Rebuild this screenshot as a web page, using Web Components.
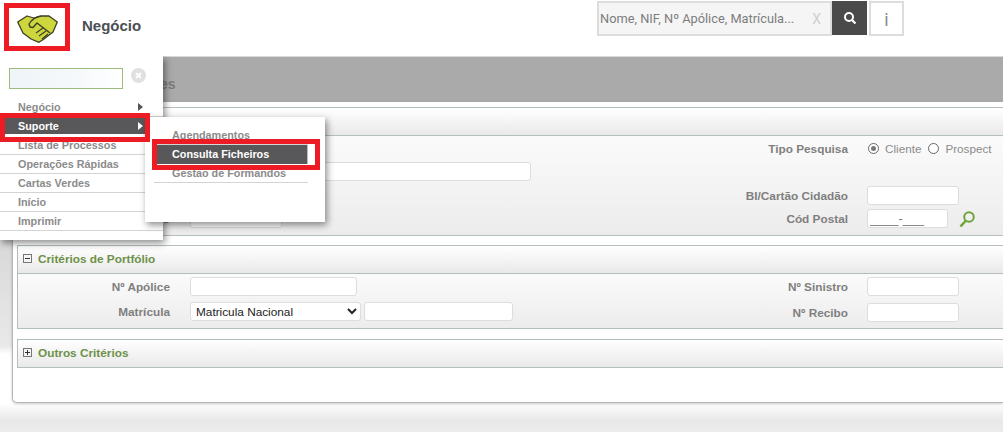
<!DOCTYPE html>
<html>
<head>
<meta charset="utf-8">
<style>
  html, body { margin: 0; height: 432px; overflow: hidden; background: #fff; }
  body { font-family: "Liberation Sans", Arial, sans-serif; }
</style>
</head>
<body>
<app-page></app-page>
<script>
class TopBar extends HTMLElement {
  constructor() {
    super();
    this.attachShadow({ mode: 'open' });
    this.shadowRoot.innerHTML = `
      <style>
        :host { display: flex; height: 56px; background: #fff; align-items: flex-start; }
        .logo { box-sizing: border-box; width: 66px; height: 48px; margin: 3px 0 0 4px; border: 5px solid #ed1c24; display: flex; align-items: center; justify-content: center; }
        h1 { font: bold 15px "Liberation Sans", sans-serif; color: #4a4f55; margin: 17px 0 0 12px; width: 515px; }
        .search { box-sizing: border-box; margin-top: 1px; width: 235px; height: 35px; background: #f5f5f5; border: 2px solid #ddd; display: flex; align-items: center; font: 12.8px Roboto, sans-serif; color: #7d7d7d; padding-left: 1px; }
        .search span { flex: 1; }
        .search i { font-style: normal; color: #cfcfcf; margin-right: 9px; font-size: 14px; }
        .go { width: 35px; height: 34px; margin-top: 1px; background: #4a4a4a; display: flex; align-items: center; justify-content: center; }
        .info { box-sizing: border-box; width: 35px; height: 35px; margin: 1px 0 0 2px; border: 2px solid #ddd; color: #8a8a8a; font: 18px Roboto, sans-serif; text-align: center; line-height: 33px; }
      </style>
      <div class="logo">
        <svg width="41" height="28" viewBox="0 0 41 28" style="margin-top:3px">
          <path d="M.7 7 L10 1 L17 3 L24 1 L32 1 L40.3 7 L36 17 L27 24 L22 27.3 L14 24 L6 18 Z" fill="#cdd63c" stroke="#3e3e28" stroke-width="1.3" stroke-linejoin="round"/>
          <path d="M24 1 C18 2 15 4 12 9 L13 12 L16 12.5 L20 8 L33 18" fill="none" stroke="#3e3e28" stroke-width="1.4" stroke-linejoin="round"/>
          <path d="M26 13 L19 18 M29 16 L22 21 M31 19 L25 24" fill="none" stroke="#3e3e28" stroke-width="1.2"/>
        </svg>
      </div>
      <h1><slot></slot></h1>
      <div class="search"><span>Nome, NIF, Nº Apólice, Matrícula...</span><i>X</i></div>
      <div class="go">
        <svg width="14" height="14" viewBox="0 0 14 14"><circle cx="6" cy="6" r="4" fill="none" stroke="#fff" stroke-width="2"/><path d="M9 9 L12.5 12.5" stroke="#fff" stroke-width="2.2"/></svg>
      </div>
      <div class="info">i</div>
    `;
  }
}

class FieldRow extends HTMLElement {
  constructor() {
    super();
    this.attachShadow({ mode: 'open' });
    this.shadowRoot.innerHTML = `
      <style>
        :host { display: flex; flex: none; align-items: center; height: 19px; font: bold 11.8px "Liberation Sans", sans-serif; color: #7f7f7f; }
        label { flex: none; text-align: right; width: var(--label-width, 120px); margin-right: var(--label-gap, 19px); white-space: nowrap; }
        ::slotted(*) { flex: none; }
      </style>
      <label></label><slot></slot>
    `;
    this.shadowRoot.querySelector('label').textContent = this.getAttribute('label');
  }
}

class GroupBox extends HTMLElement {
  constructor() {
    super();
    this.attachShadow({ mode: 'open' });
    const open = this.hasAttribute('open');
    const title = this.getAttribute('title');
    this.shadowRoot.innerHTML = `
      <style>
        :host { display: block; box-sizing: border-box; border: 1px solid #b4bfbd; border-width: 1px 0 1px 1px; }
        .head { box-sizing: border-box; height: 27px; display: flex; align-items: center; padding: 0 0 2px 5px; gap: 6px; font: bold 11.8px "Liberation Sans", sans-serif; color: #6d9148; background: linear-gradient(#fff, #e9e9e9); }
        .body { border-top: 1px solid #b4bfbd; background: linear-gradient(#fbfbfb, #ececec); }
        svg { flex: none; }
      </style>
      <div class="head">
        ${title ? `<svg width="9" height="9" viewBox="0 0 9 9"><rect x=".5" y=".5" width="8" height="8" fill="#f5f5f5" stroke="#777"/><path d="M2 4.5H7${open ? '' : 'M4.5 2V7'}" stroke="#333"/></svg>
        <span>${title}</span>` : ''}
      </div>
      ${open ? '<div class="body"><slot></slot></div>' : ''}
    `;
  }
}

class PopMenu extends HTMLElement {
  constructor() {
    super();
    this.attachShadow({ mode: 'open' });
    this.shadowRoot.innerHTML = `
      <style>
        :host { display: block; position: absolute; box-sizing: border-box; background: #fff; box-shadow: 2px 3px 7px rgba(0,0,0,.45); font: bold 10.8px "Liberation Sans", sans-serif; color: #8b8b8b; }
      </style>
      <slot></slot>
    `;
  }
}

class MenuItem extends HTMLElement {
  constructor() {
    super();
    this.attachShadow({ mode: 'open' });
    this.shadowRoot.innerHTML = `
      <style>
        :host { display: flex; align-items: center; box-sizing: border-box; height: 19px; border-bottom: 1px solid #d4d4d4; padding: 0 20px 0 var(--item-left, 18px); justify-content: space-between; }
        :host([active]) { background: linear-gradient(#58585a var(--dark, 19px), #fff var(--dark, 19px)); color: #fff; border-bottom: 0; border-right: var(--edge, 0) solid #bbb; padding-bottom: 2px; }
        .arrow { width: 0; height: 0; border-left: 5px solid #555; border-top: 4.5px solid transparent; border-bottom: 4.5px solid transparent; }
        :host([active]) .arrow { border-left-color: #fff; }
      </style>
      <span><slot></slot></span>
      ${this.hasAttribute('arrow') ? '<i class="arrow"></i>' : ''}
    `;
  }
}

class AppPage extends HTMLElement {
  constructor() {
    super();
    this.attachShadow({ mode: 'open' });
    this.shadowRoot.innerHTML = `
      <style>
        :host { display: block; position: relative; width: 1003px; height: 432px; overflow: hidden; background: linear-gradient(#d8d8d8 240px, #e9e9e9 346px, #fff 354px, #fff 403px, #e8e8e8 420px, #ececec); font: 12px "Liberation Sans", sans-serif; }
        .band { height: 46px; background: #aaaaaa; border-top: 1px solid #d9d9d9; box-sizing: border-box; font: bold 14px "Liberation Sans", sans-serif; color: #7b7b7b; padding: 19px 0 0 160px; }
        .panel { box-sizing: border-box; height: 301px; padding: 5px 0 0 4px; margin-left: 12px; background: #fff; border: 1px solid #b5b5b5; border-width: 0 0 1px 1px; border-radius: 0 0 0 5px; box-shadow: 0 1px 3px rgba(0,0,0,.2); }
        .second { margin-top: 9px; }
        .third { margin-top: 10px; }
        .client { display: flex; flex-direction: column; height: 99px; padding: 3px 44px 0 0; box-sizing: border-box; }
        .row { display: flex; flex: none; height: 19px; }
        .row.mt4 { margin-top: 4px; }
        .row.mt6 { margin-top: 5px; }
        .row field-row.end { margin-left: auto; width: 231px; }
        .cols { display: flex; justify-content: space-between; padding: 3px 44px 6px 0; }
        .col { display: flex; flex-direction: column; gap: 6px; --label-width: 152px; --label-gap: 20px; }
        .col.right { gap: 7px; --label-width: 120px; --label-gap: 19px; }
        input[type=text], select { box-sizing: border-box; height: 19px; border: 1px solid #ddd; border-radius: 3px; background: #fff; font: 12px "Liberation Sans", sans-serif; }
        select { color: #222; width: 171px; padding-left: 1px; font-size: 11.8px; }
        .w92 { width: 92px; }
        .name { width: 341px; margin-left: 172px; }
        .left { --label-width: 152px; --label-gap: 20px; }
        .cep { width: 81px; color: #777; font-size: 12.8px !important; padding: 0 2px; }
        .opts { display: flex; align-items: center; font: 11.7px "Liberation Sans", sans-serif; color: #8b8b8b; white-space: nowrap; margin-left: 1px; }
        .radio { box-sizing: border-box; width: 11px; height: 11px; border: 1px solid #666; border-radius: 50%; background: #fff; margin-right: 6px; position: relative; }
        .radio.on::after { content: ""; position: absolute; inset: 2px; border-radius: 50%; background: #777; }
        .opts span { margin-right: 7px; }
        .lens { margin-left: 10px; }
        .red { position: absolute; border: 5px solid #ed1c24; box-sizing: border-box; }
        .filter { display: flex; align-items: center; padding: 12px 0 9px 9px; gap: 8px; }
        .filter div { box-sizing: border-box; width: 114px; height: 21px; border: 1px solid #9dbb7e; background: linear-gradient(90deg, #eef4f8, #f6f9fb 60%, #fff); }
        .filter svg { margin-top: -7px; }
        .main-menu { left: 0; top: 56px; width: 163px; height: 184px; clip-path: inset(0 -14px -14px 0); --dark: 17px; }
        .sub-menu { left: 145px; top: 117px; width: 180px; height: 105px; padding: 9px 17px 0 9px; --item-left: 18px; --edge: 1px; }
      </style>
      <top-bar>Negócio</top-bar>
      <div class="band">es</div>
      <div class="panel">
        <group-box open>
          <div class="client">
            <div class="row">
              <field-row class="end" label="Tipo Pesquisa">
                <div class="opts"><i class="radio on"></i><span>Cliente</span><i class="radio"></i><span>Prospect</span></div>
              </field-row>
            </div>
            <div class="row mt4"><input type="text" class="name"></div>
            <div class="row mt6">
              <field-row class="end" label="BI/Cartão Cidadão"><input type="text" class="w92"></field-row>
            </div>
            <div class="row mt4">
              <field-row class="left" label="o"><input type="text" class="w92"></field-row>
              <field-row class="end" label="Cód Postal"><input type="text" class="cep" value="____-___">
                <svg class="lens" width="17" height="18" viewBox="0 0 17 18"><circle cx="11" cy="7" r="4.8" fill="none" stroke="#6ea33a" stroke-width="2"/><path d="M7.5 11 L2.5 16.5" stroke="#6ea33a" stroke-width="2.6"/></svg>
              </field-row>
            </div>
          </div>
        </group-box>
        <group-box class="second" title="Critérios de Portfólio" open>
          <div class="cols">
            <div class="col">
              <field-row label="Nº Apólice"><input type="text" style="width:167px"></field-row>
              <field-row label="Matrícula">
                <select><option>Matricula Nacional</option></select>
                <input type="text" style="width:149px;margin-left:3px">
              </field-row>
            </div>
            <div class="col right">
              <field-row label="Nº Sinistro"><input type="text" class="w92"></field-row>
              <field-row label="Nº Recibo"><input type="text" class="w92"></field-row>
            </div>
          </div>
        </group-box>
        <group-box class="third" title="Outros Critérios"></group-box>
      </div>
      <pop-menu class="main-menu">
        <div class="filter"><div></div>
          <svg width="15" height="15" viewBox="0 0 15 15"><circle cx="7.5" cy="7.5" r="7.5" fill="#e0e0e0"/><path d="M5 5 L10 10 M10 5 L5 10" stroke="#fff" stroke-width="2"/></svg>
        </div>
        <menu-item arrow>Negócio</menu-item>
        <menu-item arrow active>Suporte</menu-item>
        <menu-item>Lista de Processos</menu-item>
        <menu-item>Operações Rápidas</menu-item>
        <menu-item>Cartas Verdes</menu-item>
        <menu-item>Início</menu-item>
        <menu-item>Imprimir</menu-item>
      </pop-menu>
      <pop-menu class="sub-menu">
        <menu-item>Agendamentos</menu-item>
        <menu-item active>Consulta Ficheiros</menu-item>
        <menu-item>Gestão de Formandos</menu-item>
      </pop-menu>
      <div class="red" style="left:0;top:113px;width:150px;height:29px"></div>
      <div class="red" style="left:152px;top:139px;width:168px;height:31px"></div>
    `;
  }
}

customElements.define('top-bar', TopBar);
customElements.define('field-row', FieldRow);
customElements.define('group-box', GroupBox);
customElements.define('pop-menu', PopMenu);
customElements.define('menu-item', MenuItem);
customElements.define('app-page', AppPage);
</script>
</body>
</html>
